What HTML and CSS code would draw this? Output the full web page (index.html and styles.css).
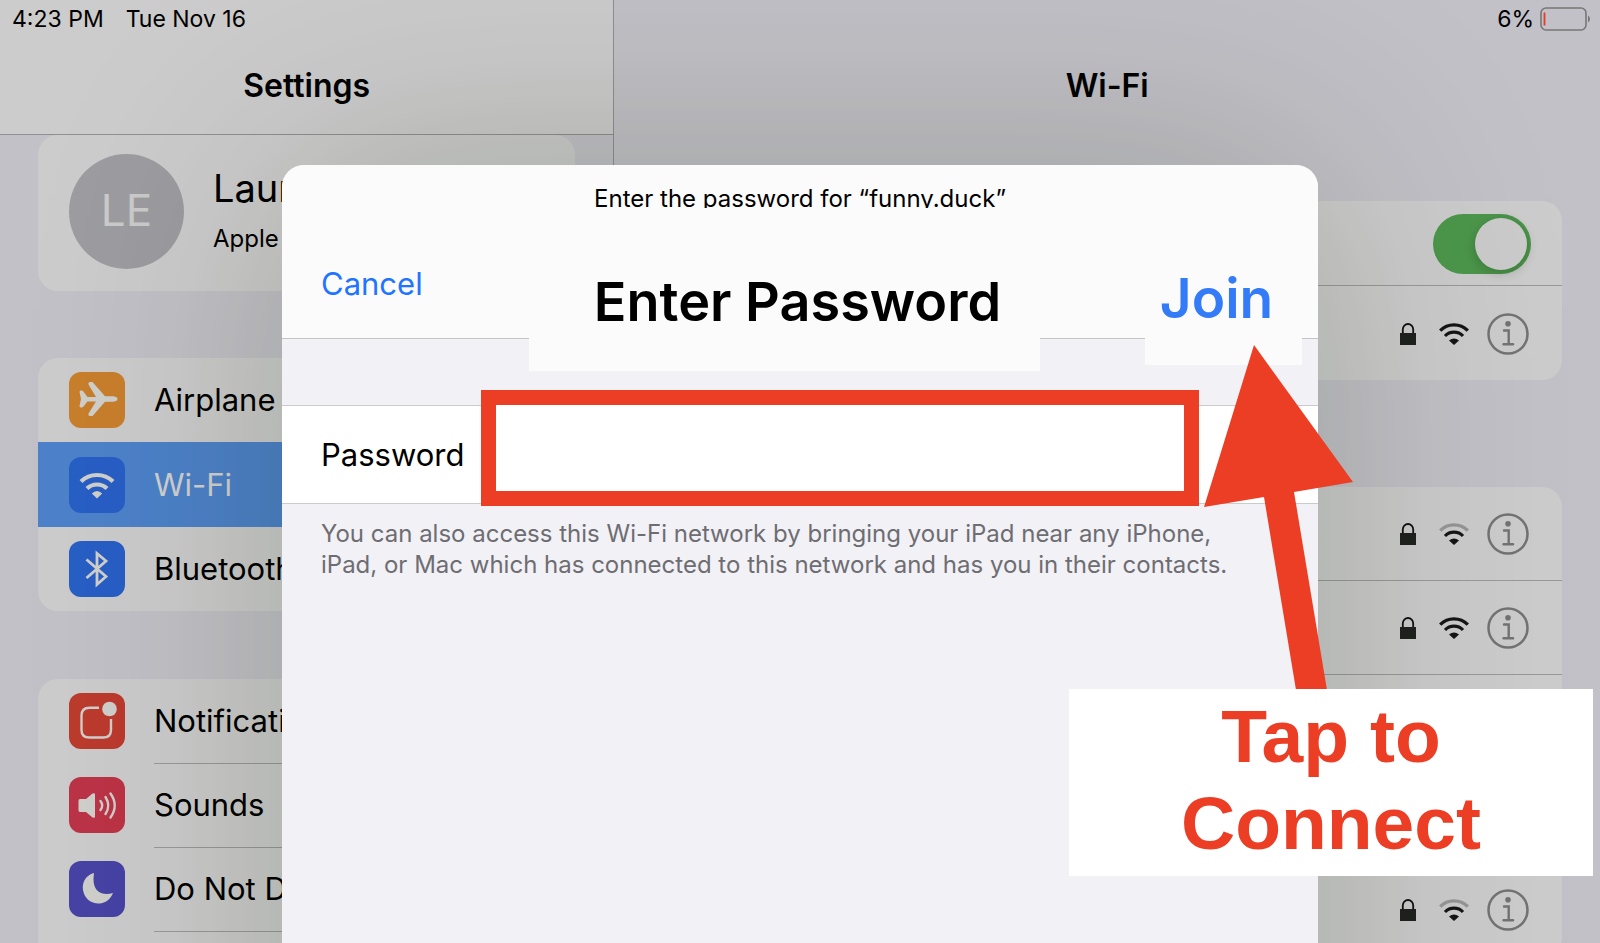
FILE: index.html
```html
<!DOCTYPE html>
<html lang="en">
<head>
<meta charset="utf-8">
<title>Wi-Fi</title>
<link rel="stylesheet" href="styles.css">
</head>
<body>
<svg class="defs" aria-hidden="true">
  <symbol id="lock" viewBox="0 0 16 22"><path d="M2.800 10V6.500a5.200 5.500 0 0 1 10.400 0V10" fill="none" stroke="#111" stroke-width="1.800"/><rect y="10" width="16" height="12" fill="#20211f"/></symbol>
  <symbol id="wifi-low" viewBox="0 0 30 22"><path d="M6 13a12.600 12.600 0 0 1 18 0" fill="none" stroke="#151515" stroke-width="3.200"/><path d="M10 17.600q5-4.400 10 0L15 22z" fill="#151515"/></symbol>
  <symbol id="wifi-arc" viewBox="0 0 30 22"><path d="M1.200 7.600a19.700 19.700 0 0 1 27.600 0" fill="none" stroke="currentColor" stroke-width="3.300"/></symbol>
  <symbol id="info" viewBox="0 0 42 42"><circle cx="21" cy="21" r="19.500" fill="none" stroke="#737373" stroke-width="2.500"/><circle cx="21" cy="10.700" r="2.800" fill="#737373"/><path d="M17 17.500h4.700V31M16.500 31.200h9.600" fill="none" stroke="#737373" stroke-width="2.400" stroke-linecap="round"/></symbol>
</svg>
<div class="screen">
  <aside class="sidebar">
    <header class="bar">
      <div class="status"><span>4:23 PM</span><span>Tue Nov 16</span></div>
      <h1 class="title">Settings</h1>
    </header>
    <a class="group profile" href="#account">
      <span class="avatar">LE</span>
      <span class="who"><span class="name">Laur</span><span class="sub">Apple</span></span>
    </a>
    <nav class="group menu">
      <a class="item" href="#airplane"><svg class="icon orange" viewBox="0 0 56 56"><path d="M10.500 20q0-2 2-1.500l1.500.5 4.500 6H27L19.500 12.500q-.5-2.500 1.500-2.500h2.500L36 24.300h8.500q4 .7 4 2.700t-4 2.700H36L23.500 44H21q-2 0-1.500-2.500L27 29.500H18.500L14 35l-1.500.5q-2 .5-2-1.500l1.500-7z" fill="#cfcfcc"/></svg><span class="label">Airplane</span></a>
      <a class="item selected" href="#wifi"><svg class="icon blue" viewBox="0 0 56 56" fill="none" stroke="#cfcfcc" stroke-width="4.200"><path d="M12 24.500a23 23 0 0 1 32 0M18 31.500a14.500 14.500 0 0 1 20 0"/><path d="M22.800 36.500q5.200-5 10.400 0L28 41.500z" fill="#cfcfcc" stroke="none"/></svg><span class="label">Wi-Fi</span></a>
      <a class="item" href="#bluetooth"><svg class="icon blue" viewBox="0 0 56 56" fill="none" stroke="#cfcfcc" stroke-width="2.800"><path d="M17.500 18.500 37 35.500 28 43.500V12.500L37 20 17.500 37"/></svg><span class="label">Bluetooth</span></a>
    </nav>
    <nav class="group menu lines">
      <a class="item" href="#notifications"><svg class="icon red" viewBox="0 0 56 56"><path d="M30 14.800H20.500q-8 0-8 8V37q0 7.500 8 7.500H34q8 0 8-7.500V26" fill="none" stroke="#cfcfcc" stroke-width="2.400"/><circle cx="40.500" cy="16" r="7.300" fill="#cfcfcc"/></svg><span class="label">Notifications</span></a>
      <a class="item" href="#sounds"><svg class="icon pink" viewBox="0 0 56 56" fill="none" stroke="#cfcfcc" stroke-width="2.400" stroke-linecap="round"><path d="M11 22q-1.500 0-1.500 2v9q0 2 1.500 2h6l6.500 5.500q2.500 1 2.500-1V17.500q0-2-2.500-1L17 22z" fill="#cfcfcc" stroke="none"/><path d="M31.500 24q3.500 4.500 0 9M36.500 20q5.500 8.500 0 17M41.500 16.500q8.500 12 0 24"/></svg><span class="label">Sounds</span></a>
      <a class="item" href="#dnd"><svg class="icon indigo" viewBox="0 0 56 56"><path d="M24.500 12C16 15 13 22 14 29c1.500 9 8.500 14 16.500 13.500 6-.5 11-4 13.500-10.500-9 2.500-16 0-18.500-7-1.500-4.500-1-9-.5-12.500z" fill="#cfcfcc"/></svg><span class="label">Do Not Disturb</span></a>
      <span class="item"></span>
    </nav>
  </aside>
  <main class="pane">
    <div class="status end"><span>6%</span><svg class="battery" viewBox="0 0 50 24"><rect x="1" y="1" width="45" height="22" rx="5" fill="none" stroke="#777" stroke-width="1.600"/><path d="M4.500 5.500v13" stroke="#e8392b" stroke-width="1.800"/><path d="M48 8.500q2 1 2 3.500t-2 3.500z" fill="#777"/></svg></div>
    <h2 class="title">Wi-Fi</h2>
    <section class="group top">
      <div class="row short"><input class="switch" type="checkbox" role="switch" aria-label="Wi-Fi" checked></div>
      <div class="row"><svg class="lock"><use href="#lock"/></svg><svg class="wifi"><use href="#wifi-low"/><use href="#wifi-arc"/></svg><button class="more" type="button" aria-label="Network details"><svg><use href="#info"/></svg></button></div>
    </section>
    <section class="group networks">
      <div class="row"><svg class="lock"><use href="#lock"/></svg><svg class="wifi weak"><use href="#wifi-low"/><use href="#wifi-arc"/></svg><button class="more" type="button" aria-label="Network details"><svg><use href="#info"/></svg></button></div>
      <div class="row"><svg class="lock"><use href="#lock"/></svg><svg class="wifi"><use href="#wifi-low"/><use href="#wifi-arc"/></svg><button class="more" type="button" aria-label="Network details"><svg><use href="#info"/></svg></button></div>
      <div class="row"></div>
      <div class="row"></div>
      <div class="row"><svg class="lock"><use href="#lock"/></svg><svg class="wifi weak"><use href="#wifi-low"/><use href="#wifi-arc"/></svg><button class="more" type="button" aria-label="Network details"><svg><use href="#info"/></svg></button></div>
    </section>
  </main>
  <div class="overlay">
    <form class="dialog" role="dialog" aria-labelledby="dialog-title">
      <header class="dialog-head">
        <p class="prompt">Enter the password for “funny.duck”</p>
        <div class="actions">
          <button class="cancel" type="button">Cancel</button>
          <h2 class="dialog-title" id="dialog-title">Enter Password</h2>
          <button class="join" type="button">Join</button>
        </div>
      </header>
      <div class="field">
        <label for="password">Password</label>
        <input id="password" type="password">
      </div>
      <p class="help">You can also access this Wi-Fi network by bringing your iPad near any iPhone, iPad, or Mac which has connected to this network and has you in their contacts.</p>
      <svg class="arrow" viewBox="0 0 150 345" aria-hidden="true"><path d="M50 0 149 137 90 147 123 345H92L60 152 0 162z" fill="#eb3e25"/></svg>
      <div class="callout">Tap to<br>Connect</div>
    </form>
  </div>
</div>
</body>
</html>
```
FILE: styles.css
```css
* { box-sizing: border-box; }
body { margin: 0; font-family: Inter, "Liberation Sans", sans-serif; color: #000; background: #c2c1c7; }
h1, h2, p { margin: 0; }
a { color: inherit; text-decoration: none; }
button { border: 0; padding: 0; background: none; font: inherit; }
svg { display: block; }
.defs { position: absolute; width: 0; height: 0; }
.screen { position: relative; display: flex; height: 100vh; overflow: hidden; }

.sidebar { flex: 0 0 38.4%; border-right: 1px solid #8f9090; }
.bar { height: 135px; background: #cccccc; border-bottom: 1px solid #8f9090; }
.status { display: flex; align-items: center; gap: 22px; height: 38px; padding-left: 12px; font-size: 23px; line-height: 30px; }
.status.end { justify-content: flex-end; gap: 6px; padding-right: 10px; }
.battery { width: 50px; height: 24px; }
.title { padding-top: 28px; font-size: 32px; line-height: 40px; font-weight: 600; text-align: center; }

.group { display: block; margin: 0 38px; border-radius: 20px; background: #cccccc; overflow: hidden; }
.profile { display: flex; align-items: center; gap: 29px; height: 156px; padding: 0 31px 4px; }
.avatar { width: 115px; height: 115px; border-radius: 50%; background: #9d9da1; color: #cbcbcb; font-size: 44px; line-height: 112px; text-align: center; }
.who { display: flex; flex-direction: column; gap: 14px; padding-bottom: 2px; }
.name { font-size: 38px; line-height: 44px; }
.sub { font-size: 24px; line-height: 30px; }
.menu { margin-top: 67px; }
.menu.lines { margin-top: 68px; }
.item { display: flex; align-items: center; gap: 29px; height: 84px; padding-left: 31px; font-size: 31px; line-height: 40px; }
.label { flex: 1; line-height: 84px; }
.lines .label { border-bottom: 1px solid #999; }
.selected { height: 85px; background: #4d82ca; color: #d2d2d2; }
.icon { width: 56px; height: 56px; border-radius: 12px; }
.orange { background: #c97f2c; }
.blue { background: #285fc6; }
.red { background: #bc3b2d; }
.pink { background: #bc3346; }
.indigo { background: #4643a6; }

.pane { flex: 1; }
.top { margin-top: 95px; }
.networks { margin-top: 107px; }
.row { display: flex; justify-content: flex-end; align-items: center; height: 94px; padding: 1px 33px 0 0; border-bottom: 1px solid #999; }
.row.short { height: 85px; padding-right: 31px; }
.top .row:last-child { border-bottom: 0; }
.lock { width: 16px; height: 22px; margin-right: 23px; }
.wifi { width: 30px; height: 22px; margin-right: 18px; color: #151515; }
.weak { color: #969696; }
.more, .more svg { width: 42px; height: 42px; }
.switch { appearance: none; display: flex; align-items: center; justify-content: flex-end; width: 98px; height: 60px; margin: 0; padding-right: 4px; border-radius: 30px; background: #4c974b; }
.switch::before { content: ""; width: 52px; height: 52px; border-radius: 50%; background: #cbcbcb; box-shadow: 0 3px 12px rgba(0, 0, 0, .2); }

.overlay { position: absolute; inset: 0 0 -300px; display: flex; justify-content: center; padding-top: 165px; }
.dialog { position: relative; width: 64.75%; border-radius: 22px 22px 0 0; background: #f2f1f6; box-shadow: 0 0 250px rgba(20, 34, 4, .22); }
.dialog-head { height: 174px; border-bottom: 1px solid #c4c4c8; border-radius: 22px 22px 0 0; background: #fbfbfc; }
.prompt { height: 43px; padding-top: 18px; overflow: hidden; font-size: 24px; line-height: 32px; text-align: center; }
.actions { display: grid; grid-template-columns: 247fr 511fr 105fr 157fr 16fr; align-items: start; height: 130px; }
.cancel { justify-self: start; padding: 56px 0 0 39px; color: #1f75ff; font-size: 31px; line-height: 40px; }
.dialog-title { height: 163px; padding: 62px 0 0 26px; background: #fbfbfc; font-size: 54px; line-height: 64px; font-weight: 600; text-align: center; white-space: nowrap; }
.join { grid-column: 4; height: 157px; padding: 58px 14px 35px 0; background: #fbfbfc; color: #347bf8; font-size: 55px; line-height: 64px; font-weight: 600; text-align: center; }
.field { display: flex; align-items: center; height: 99px; margin-top: 66px; padding: 0 119px 0 39px; border: solid #cbcbcf; border-width: 1px 0; background: #fff; font-size: 31px; }
.field label { flex: 0 0 160px; }
.field input { flex: 1; min-width: 0; height: 116px; margin: -16px 0 -3px; border: 15px solid #eb3e25; border-radius: 0; background: #fff; font: inherit; outline: 0; }
.help { padding: 14px 50px 0 39px; color: #6d6d72; font-size: 24px; line-height: 31px; }
.arrow { position: absolute; top: 180px; right: -36px; width: 150px; height: 345px; }
.callout { position: absolute; top: 524px; right: -275px; width: 524px; padding: 4px 0 9px; background: #fff; color: #eb3e25; font: bold 75px/87px "Liberation Sans", Arial, sans-serif; text-align: center; }
```
